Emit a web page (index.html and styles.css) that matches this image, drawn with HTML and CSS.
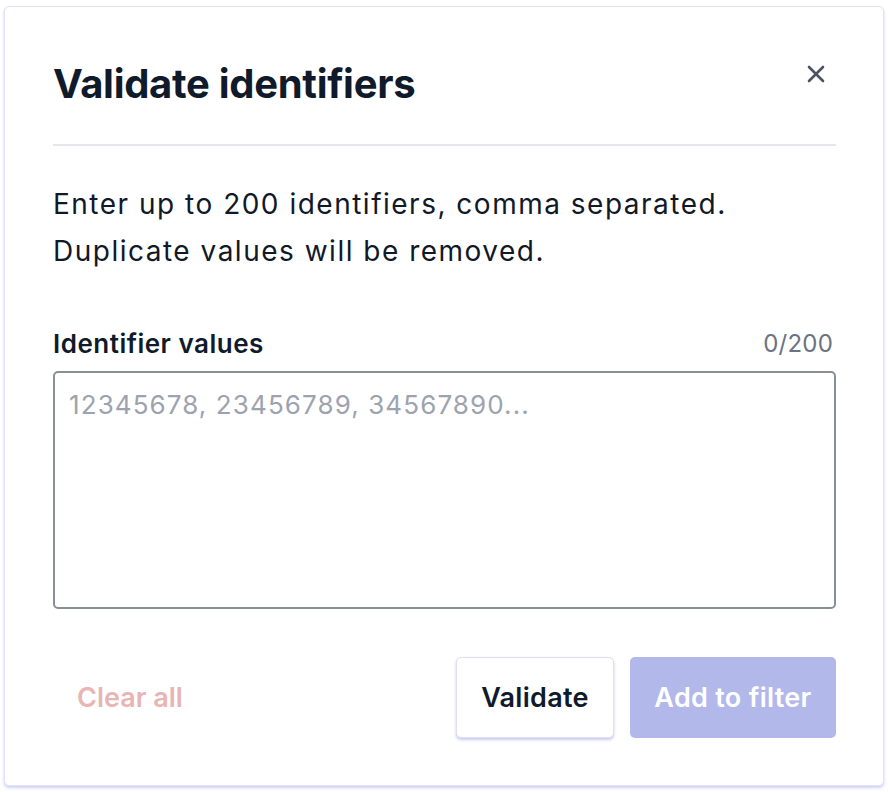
FILE: index.html
```html
<!DOCTYPE html>
<html lang="en">
<head>
<meta charset="utf-8">
<title>Validate identifiers</title>
<link rel="stylesheet" href="styles.css">
</head>
<body>
<div class="dialog">
  <div class="dialog-header">
    <h1 class="dialog-title">Validate identifiers</h1>
    <button class="close-btn" aria-label="Close">
      <svg width="18" height="18" viewBox="0 0 18 18" fill="none"><path d="M2 2L16 16M16 2L2 16" stroke="#4b5360" stroke-width="2.6" stroke-linecap="round"/></svg>
    </button>
  </div>
  <hr class="divider">
  <p class="description">Enter up to 200 identifiers, comma separated.<br>Duplicate values will be removed.</p>
  <div class="field-head">
    <label class="field-label" for="ids">Identifier values</label>
    <span class="counter">0/200</span>
  </div>
  <textarea id="ids" class="field-input" placeholder="12345678, 23456789, 34567890..."></textarea>
  <div class="dialog-footer">
    <button class="btn-clear">Clear all</button>
    <div class="footer-actions">
      <button class="btn btn-secondary">Validate</button>
      <button class="btn btn-primary">Add to filter</button>
    </div>
  </div>
</div>
</body>
</html>
```

FILE: styles.css
```css
* { box-sizing: border-box; }
html, body { margin: 0; background: #ffffff; }
body {
  padding: 6px 4px;
  font-family: Inter, "Noto Sans", "Liberation Sans", sans-serif;
  color: #111827;
}
.dialog {
  width: 880px;
  height: 780px;
  background: #fff;
  border: 1px solid #e2e2f6;
  border-radius: 5px;
  box-shadow: 0 2px 3px rgba(150, 150, 230, 0.45);
  padding: 52px 47px 47px 48px;
  display: flex;
  flex-direction: column;
}
.dialog-header {
  display: flex;
  align-items: center;
  justify-content: space-between;
  height: 49px;
}
.dialog-title {
  margin: 0;
  font-size: 40px;
  line-height: 49px;
  font-weight: 700;
  color: #0f1a2a;
  letter-spacing: -0.3px;
}
.close-btn {
  border: 0;
  background: none;
  padding: 0;
  width: 18px;
  height: 18px;
  margin-right: 11px;
  margin-top: -19px;
  display: flex;
  cursor: pointer;
}
.divider {
  margin: 36px 0 0;
  border: 0;
  height: 2px;
  background: #e6e7ea;
}
.description {
  margin: 35px 0 0;
  font-size: 28px;
  line-height: 47px;
  letter-spacing: 1.5px;
  color: #111827;
}
.field-head {
  margin-top: 50px;
  display: flex;
  justify-content: space-between;
  align-items: center;
  height: 36px;
}
.field-label {
  font-size: 26px;
  font-weight: 600;
  letter-spacing: 0.5px;
  color: #0f1a2a;
}
.counter {
  font-size: 24px;
  letter-spacing: 0.2px;
  color: #6b7280;
  margin-right: 3px;
}
.field-input {
  margin-top: 10px;
  width: 100%;
  height: 238px;
  border: 2px solid #8a8f96;
  border-radius: 5px;
  padding: 14px 14px;
  font-family: inherit;
  font-size: 26px;
  line-height: 36px;
  letter-spacing: 1.1px;
  color: #111827;
  resize: none;
  outline: none;
}
.field-input::placeholder { color: #9ca3af; }
.dialog-footer {
  margin-top: 48px;
  display: flex;
  align-items: center;
  justify-content: space-between;
}
.btn-clear {
  border: 0;
  background: none;
  font-family: inherit;
  font-size: 27px;
  font-weight: 600;
  color: #e8b5b3;
  padding: 0 24px;
  height: 80px;
}
.footer-actions {
  display: flex;
  gap: 16px;
}
.btn {
  font-family: inherit;
  font-size: 27px;
  font-weight: 600;
  height: 81px;
  border-radius: 5px;
  padding: 0 20px;
  letter-spacing: 0.3px;
  cursor: pointer;
}
.btn-secondary {
  background: #fff;
  color: #0f1a2a;
  border: 1px solid #dedef5;
  box-shadow: 0 2px 3px rgba(140, 140, 220, 0.45);
  width: 158px;
}
.btn-primary {
  background: #b3b8ea;
  color: #fff;
  border: 0;
  width: 206px;
}
```
